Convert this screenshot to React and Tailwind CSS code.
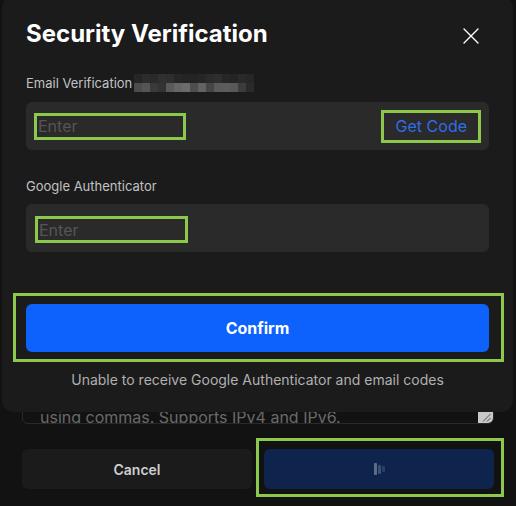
import React from 'react';
import { X } from 'lucide-react';

const GREEN = 'border-[#8cc84b]';

// blurred e-mail address next to the label
const PIXELS = [
  ['#262626', '#2c2c2c', '#2a2a2a', '#303030', '#2e2e2e', '#262626', '#242424', '#232323', '#262626', '#2b2b2b', '#2e2e2e', '#262626', '#242424', '#2a2a2a', '#262626'],
  ['#4c4c4c', '#555555', '#3a3a3a', '#333333', '#5a5a5a', '#666666', '#6c6c6c', '#4e4e4e', '#626262', '#454545', '#5a5a5a', '#5c5c5c', '#585858', '#3c3c3c', '#2a2a2a'],
];

function Pixelated() {
  return (
    <div className="flex flex-col ml-[2px] mt-[-3px]">
      {PIXELS.map((row, i) => (
        <div key={i} className="flex">
          {row.map((c, j) => (
            <div key={j} className="w-[8px] h-[9px]" style={{ backgroundColor: c }} />
          ))}
        </div>
      ))}
    </div>
  );
}

function LoadingBars() {
  return (
    <div className="flex items-center gap-[1px]">
      <div className="w-[3px] h-[12px] bg-[#5d6b86] rounded-[1px]" />
      <div className="w-[3px] h-[9px] bg-[#3c4f73] rounded-[1px]" />
      <div className="w-[3px] h-[6px] bg-[#2b3f64] rounded-[1px]" />
    </div>
  );
}

export default function App() {
  return (
    <div
      className="relative h-[506px] w-[516px] overflow-hidden bg-[#121212] flex flex-col justify-end px-[22px] pb-[17px]"
      style={{ fontFamily: 'Inter, "Liberation Sans", sans-serif' }}
    >
      {/* form underneath the dialog */}
      <div className="relative h-[120px] border border-[#2a2a2a] rounded-md overflow-hidden flex flex-col justify-end px-[17px]">
        <p className="text-[16px] leading-[24px] text-[#6a6a6a] mb-[-6px]">
          Enter IP addresses separated
          <br />
          using commas. Supports IPv4 and IPv6.
        </p>
        <div className="absolute right-[0px] bottom-[0px] w-[15px] h-[12px] bg-[#c8c8c8] flex items-center justify-center">
          <svg width="10" height="9" viewBox="0 0 10 9">
            <path d="M2 8.5 L9.5 1 M6 8.5 L9.5 5" stroke="#555" strokeWidth="1" />
          </svg>
        </div>
      </div>
      <div className="flex gap-[12px] mt-[25px]">
        <button className="flex-1 h-[40px] rounded-md bg-[#1b1b1b] text-[#cfcfcf] text-[14px] font-semibold">
          Cancel
        </button>
        <div className="relative flex-1">
          <button className="w-full h-[40px] rounded-md bg-[#0e244d] flex items-center justify-center">
            <LoadingBars />
          </button>
          <div className={`absolute left-[-8px] right-[-10px] top-[-11px] bottom-[-8px] border-[3px] ${GREEN}`} />
        </div>
      </div>

      {/* dialog */}
      <div className="absolute left-[2px] right-[3px] top-[-4px] h-[416px] rounded-xl bg-[#1b1b1b] px-[24px] pt-[20px]">
        <div className="flex items-center justify-between">
          <h2 className="text-[24px] leading-[36px] font-bold text-white">Security Verification</h2>
          <X size={28} strokeWidth={1.2} className="text-white mr-[4px] mt-[4px]" />
        </div>

        <div className="flex items-center mt-[20px] h-[24px]">
          <span className="text-[13px] text-[#c2c2c2]">Email Verification</span>
          <Pixelated />
        </div>
        <div className="mt-[6px] h-[48px] rounded-md bg-[#2a2a2a] flex items-center justify-between px-[8px]">
          <div className={`w-[152px] h-[27px] border-[3px] ${GREEN} flex items-center pl-px text-[16px] text-[#555555]`}>
            Enter
          </div>
          <div className={`h-[33px] border-[3px] ${GREEN} flex items-center pl-[12px] pr-[11px] text-[16px] text-[#2f6de8]`}>
            Get Code
          </div>
        </div>

        <div className="flex items-center mt-[25px] h-[24px]">
          <span className="text-[13px] text-[#c2c2c2]">Google Authenticator</span>
        </div>
        <div className="mt-[5px] h-[48px] rounded-md bg-[#2a2a2a] flex items-center px-[9px]">
          <div className={`w-[153px] h-[27px] border-[3px] ${GREEN} flex items-center pl-px mt-[3px] text-[16px] text-[#555555]`}>
            Enter
          </div>
        </div>

        <div className="relative mt-[52px]">
          <button className="w-full h-[48px] rounded-md bg-[#0d62fe] text-white text-[16px] font-bold">
            Confirm
          </button>
          <div className={`absolute left-[-13px] right-[-15px] top-[-11px] bottom-[-10px] border-[3px] ${GREEN}`} />
        </div>

        <p className="mt-[17px] text-center text-[14px] text-[#b0b0b0]">
          Unable to receive Google Authenticator and email codes
        </p>
      </div>
    </div>
  );
}
